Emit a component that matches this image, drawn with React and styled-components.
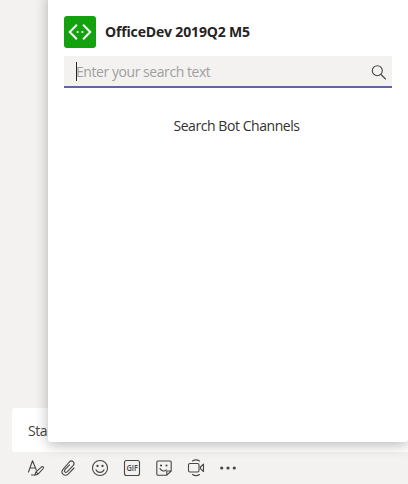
import React from "react";
import styled, { createGlobalStyle } from "styled-components";

const GlobalStyle = createGlobalStyle`
  * { box-sizing: border-box; }
  body {
    margin: 0;
    overflow: hidden;
    background: #f3f2f1;
    color: #252423;
    font-family: "Open Sans", "Noto Sans", sans-serif;
    font-size: 14px;
    letter-spacing: -0.44px;
  }
`;

const Page = styled.main`
  position: relative;
  display: flex;
  flex-direction: column;
  justify-content: flex-end;
  width: 408px;
  height: 484px;
  overflow: hidden;
  background: #f3f2f1;
`;

const ComposeBox = styled.div`
  display: flex;
  align-items: center;
  height: 44px;
  margin-left: 12px;
  padding: 0 16px;
  border-radius: 3px 0 0 3px;
  background: #fff;
  color: #484644;
  white-space: nowrap;
`;

const Toolbar = styled.div`
  display: flex;
  align-items: center;
  gap: 12px;
  height: 32px;
  padding-left: 26px;
`;

const ToolButton = styled.button`
  display: flex;
  width: 20px;
  height: 20px;
  padding: 0;
  border: 0;
  background: none;
  color: #484644;
`;

const Icon = styled.svg`
  display: block;
  flex: none;
  width: 20px;
  height: 20px;
  fill: none;
  stroke: currentColor;
  stroke-width: 1.1;
  stroke-linecap: round;
  stroke-linejoin: round;
`;

const LogoMark = styled.svg`
  display: block;
  width: 32px;
  height: 32px;
  fill: none;
  stroke: currentColor;
  stroke-width: 2;
`;

const GifLabel = styled.text`
  fill: currentColor;
  stroke: none;
  font: 600 8.5px "Open Sans", sans-serif;
  letter-spacing: 0;
`;

const Popup = styled.section`
  position: absolute;
  top: -8px;
  left: 48px;
  display: flex;
  flex-direction: column;
  width: 360px;
  height: 450px;
  padding: 24px 16px 0;
  border-radius: 3px;
  background: #fff;
  box-shadow: 0 3px 14px rgba(0, 0, 0, 0.28);
`;

const Header = styled.header`
  display: flex;
  align-items: center;
  gap: 9px;
  height: 32px;
`;

const Logo = styled.div`
  width: 32px;
  height: 32px;
  border-radius: 3px;
  background: #13a10e;
  color: #fff;
`;

const Title = styled.h1`
  margin: 0;
  font-size: 14px;
  line-height: 20px;
  padding-bottom: 1px;
  font-weight: 700;
  letter-spacing: -0.16px;
  white-space: nowrap;
`;

const SearchField = styled.div`
  display: flex;
  align-items: center;
  height: 32px;
  margin-top: 8px;
  padding: 0 4px 0 12px;
  border-bottom: 2px solid #6264a7;
  background: #f3f2f1;
  color: #484644;
`;

const Caret = styled.span`
  width: 1px;
  height: 19px;
  margin-right: -1px;
  background: #252423;
`;

const Placeholder = styled.span`
  flex: 1;
  padding-top: 2px;
  color: #a19f9d;
  line-height: 20px;
`;

const SearchIcon = styled(Icon)`
  position: relative;
  top: 1px;
`;

const Hint = styled.p`
  margin: 28px 0 0;
  padding-left: 17px;
  text-align: center;
  line-height: 20px;
  color: #323130;
`;

export default function App() {
  return (
    <Page>
      <GlobalStyle />
      <ComposeBox>Start a new conversation</ComposeBox>
      <Toolbar>
        <ToolButton aria-label="Format">
          <Icon viewBox="0 0 20 20">
            <path d="M2.500 14 6.500 2.800 10.300 12M4 10h5.400M5.500 17h3.300M8.800 17.200l1.200-3.400 5.600-5c1.300-.7 2.500.5 1.600 1.700L12 16.200zM10 13.800l2 2.200" />
          </Icon>
        </ToolButton>
        <ToolButton aria-label="Attach">
          <Icon viewBox="0 0 20 20">
            <path d="m16 10-5.600 5.800c-3.600 3.500-8.500-.4-5.400-4.400L11.300 4c2.600-2.700 6.200.5 4 3.300l-6.200 6.500c-1.700 1.500-3.600-.4-2.200-2.200l4.600-4.800" />
          </Icon>
        </ToolButton>
        <ToolButton aria-label="Emoji">
          <Icon viewBox="0 0 20 20">
            <circle cx="10" cy="10" r="7.500" />
            <path d="M6 11.800c1.400 3.400 6.600 3.400 8 0" />
            <circle cx="7.500" cy="8" r=".6" fill="currentColor" />
            <circle cx="12.500" cy="8" r=".6" fill="currentColor" />
          </Icon>
        </ToolButton>
        <ToolButton aria-label="GIF">
          <Icon viewBox="0 0 20 20">
            <rect x="2.500" y="2.500" width="15" height="15" rx="2" />
            <GifLabel x="4.400" y="13" textLength="11.500" lengthAdjust="spacingAndGlyphs">GIF</GifLabel>
          </Icon>
        </ToolButton>
        <ToolButton aria-label="Sticker">
          <Icon viewBox="0 0 20 20">
            <path d="M4 3h12a1.200 1.200 0 0 1 1.200 1.200V13L12.800 17.200H4A1.200 1.200 0 0 1 2.800 16V4.200A1.200 1.200 0 0 1 4 3ZM12.800 17.200V13h4.400M6 10.500c1.200 2.600 4.300 3.200 6.200 1.400" />
            <circle cx="7" cy="7.500" r=".5" fill="currentColor" />
            <circle cx="12.500" cy="7.500" r=".5" fill="currentColor" />
          </Icon>
        </ToolButton>
        <ToolButton aria-label="Meet now">
          <Icon viewBox="0 0 20 20">
            <rect x="2.500" y="5.500" width="10.500" height="8.500" rx="1.500" />
            <path d="m14.500 9 3-2.800v7.300l-3-2.800zM6.500 3c2-1.300 5-1.300 7 0M6.500 16.500c2 1.300 5 1.300 7 0" />
          </Icon>
        </ToolButton>
        <ToolButton aria-label="More options">
          <Icon viewBox="0 0 20 20">
            <g fill="currentColor" stroke="none">
              <circle cx="3.700" cy="10" r="1.600" />
              <circle cx="10" cy="10" r="1.600" />
              <circle cx="16.300" cy="10" r="1.600" />
            </g>
          </Icon>
        </ToolButton>
      </Toolbar>
      <Popup>
        <Header>
          <Logo>
            <LogoMark viewBox="0 0 32 32">
              <path d="m12.800 8.800-7 7.200 7 7.200M19.200 8.800l7 7.200-7 7.200" />
              <g fill="currentColor" stroke="none">
                <circle cx="13.600" cy="16" r="1.100" />
                <circle cx="18.400" cy="16" r="1.100" />
              </g>
            </LogoMark>
          </Logo>
          <Title>OfficeDev 2019Q2 M5</Title>
        </Header>
        <SearchField>
          <Caret />
          <Placeholder>Enter your search text</Placeholder>
          <SearchIcon viewBox="0 0 20 20">
            <circle cx="9.300" cy="8.700" r="5" />
            <path d="m13 12.500 4.500 4.500" />
          </SearchIcon>
        </SearchField>
        <Hint>Search Bot Channels</Hint>
      </Popup>
    </Page>
  );
}
